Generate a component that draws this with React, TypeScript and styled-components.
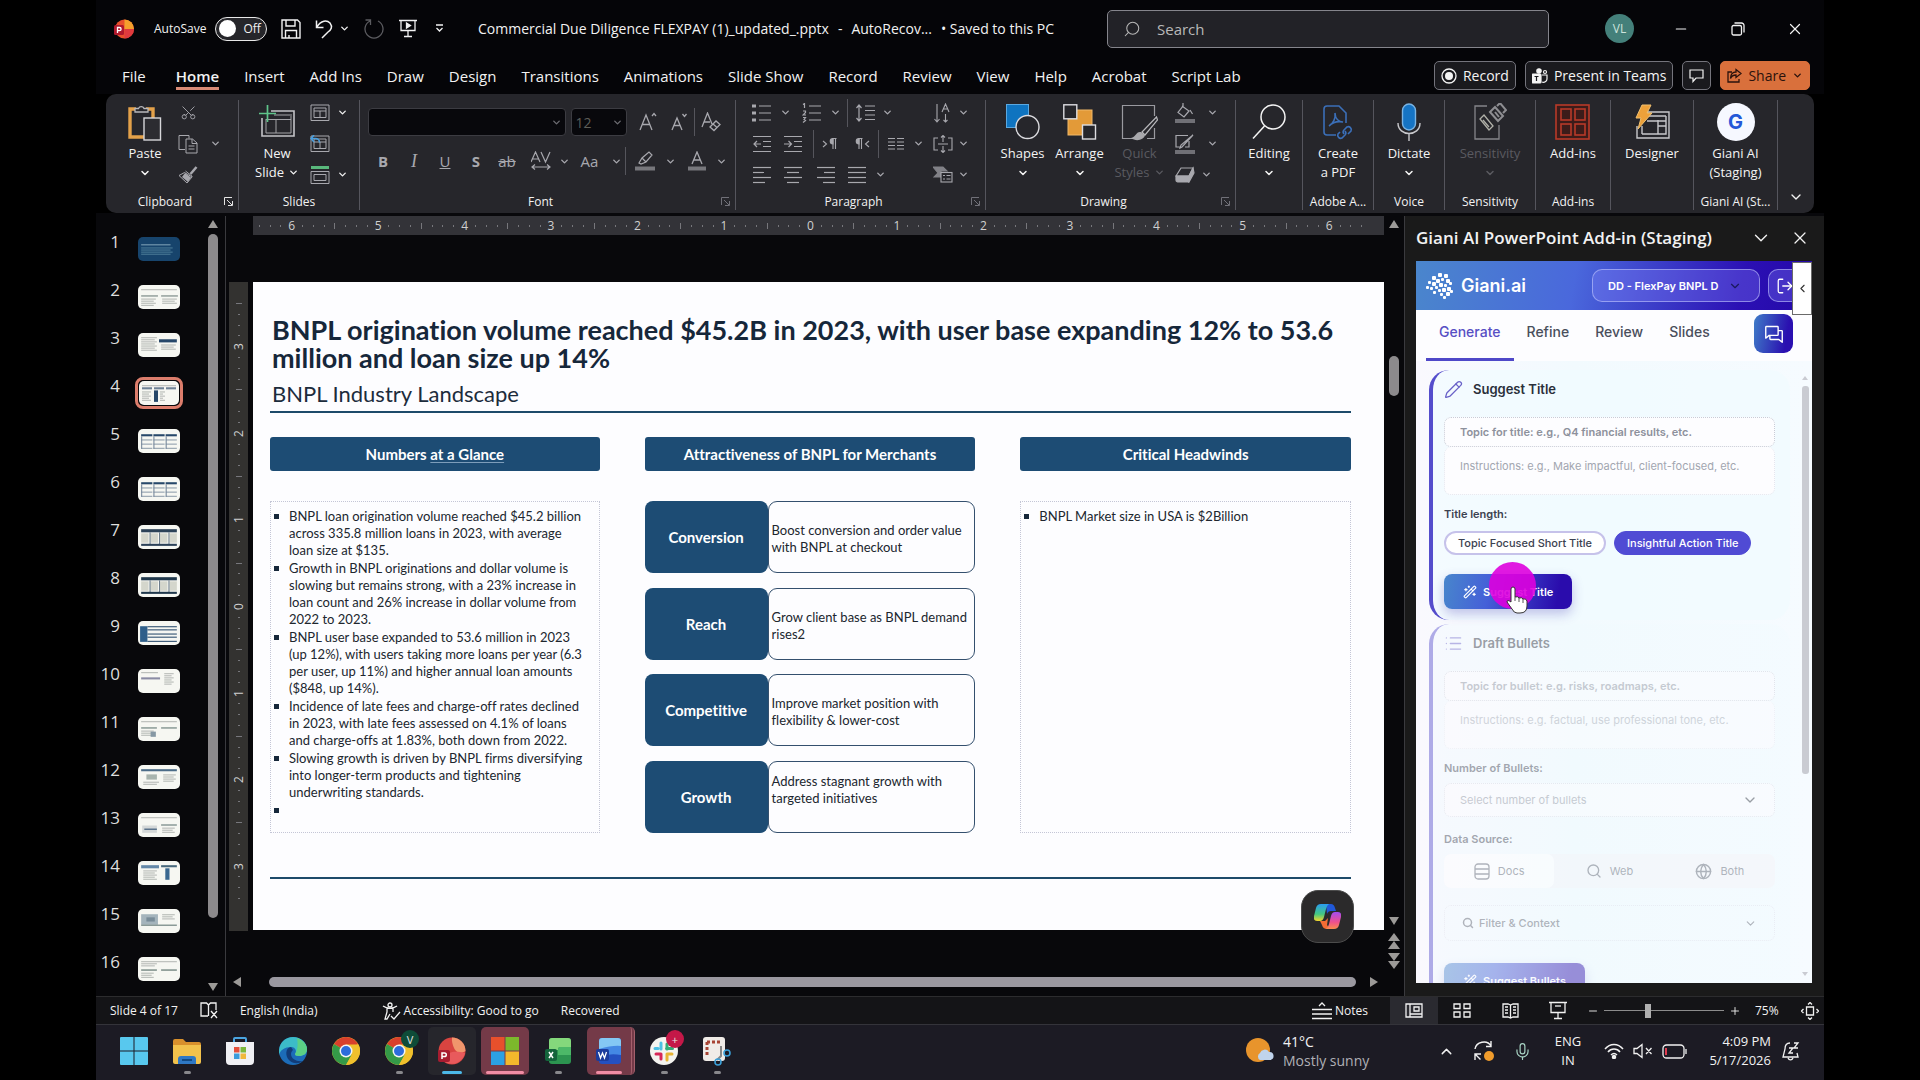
import {
  ChevronDown,
  ChevronLeft,
  ChevronUp,
  Globe,
  List,
  LogOut,
  Mic,
  Minus,
  Pencil,
  Plus,
  Scissors,
  Search,
  WandSparkles,
  X,
} from 'lucide-react';
import React, { ReactNode, useState } from 'react';
import { PiChats } from 'react-icons/pi';
import styled, { createGlobalStyle, css } from 'styled-components';

const GlobalStyle = createGlobalStyle`
  * {
    box-sizing: border-box;
  }
  body {
    margin: 0;
    background: #000;
    color: #f2f2f2;
    font-family: 'Open Sans', 'Noto Sans', sans-serif;
    font-size: 13px;
  }
  button, input, select, textarea {
    font: inherit;
    color: inherit;
    margin: 0;
  }
  button {
    background: none;
    border: none;
    padding: 0;
    cursor: pointer;
  }
  svg {
    display: block;
    flex: none;
  }
  ul, ol {
    list-style: none;
    margin: 0;
    padding: 0;
  }
`;

const Page = styled.div`
  display: flex;
  flex-direction: column;
  height: 100vh;
  padding: 0 96px;
  background: #000;
  overflow: hidden;
`;

/* ---------- title bar ---------- */

const TitleBar = styled.header`
  display: flex;
  align-items: center;
  height: 57px;
  flex: none;
  padding: 0 18px;
  background: #050508;
`;

const QuickAccess = styled.div`
  display: flex;
  align-items: center;
  gap: 14px;
  width: 364px;
  flex: none;
`;

const SaveSwitch = styled.label`
  display: flex;
  align-items: center;
  gap: 9px;
  font-size: 12px;
  margin-left: 6px;
`;

const SwitchInput = styled.input`
  position: absolute;
  opacity: 0;
`;

const SwitchTrack = styled.span`
  display: flex;
  align-items: center;
  gap: 7px;
  width: 52px;
  height: 24px;
  padding: 0 3px;
  border: 1px solid #e8e8e8;
  border-radius: 12px;
  background: #26262a;
  &::before {
    content: '';
    width: 17px;
    height: 17px;
    border-radius: 50%;
    background: #fff;
  }
`;

const IconRow = styled.div<{ $gap?: number }>`
  display: flex;
  align-items: center;
  gap: ${({ $gap }) => $gap ?? 12}px;
`;

const PagerArrows = styled.div`
  display: flex;
  flex-direction: column;
  gap: 4px;
  padding: 8px 0 22px;
`;

const DimIcon = styled.span`
  color: #5c5c60;
`;

const DocTitle = styled.div`
  display: flex;
  gap: 9px;
  flex: 1;
  font-size: 14px;
  white-space: nowrap;
`;

const SearchBox = styled.label`
  display: flex;
  align-items: center;
  gap: 16px;
  width: 442px;
  height: 38px;
  padding: 0 15px;
  border: 1px solid #85858c;
  border-radius: 5px;
  background: #222227;
  color: #b8b8b8;
  font-size: 15px;
  input {
    flex: 1;
    border: none;
    background: none;
    outline: none;
    padding: 0;
  }
  input::placeholder {
    color: #b8b8b8;
  }
`;

const WindowControls = styled.div`
  display: flex;
  align-items: center;
  justify-content: flex-end;
  gap: 37px;
  width: 257px;
  padding-right: 1px;
`;

const ControlButton = styled.button`
  display: grid;
  place-items: center;
  width: 20px;
  height: 20px;
`;

const Avatar = styled.div`
  display: grid;
  place-items: center;
  width: 29px;
  height: 29px;
  border-radius: 50%;
  background: #44807a;
  color: #cde4dc;
  font-size: 12px;
`;

/* ---------- ribbon tabs ---------- */

const TabBar = styled.nav`
  display: flex;
  align-items: center;
  height: 37px;
  flex: none;
  padding: 0 14px 0 26px;
  background: #050508;
`;

const Tabs = styled.div`
  display: flex;
  gap: 25px;
  flex: 1;
  > :first-child {
    margin-right: 5px;
  }
`;

const RibbonTab = styled.button<{ $active?: boolean }>`
  height: 29px;
  padding-top: 3px;
  font-size: 15px;
  white-space: nowrap;
  border-bottom: 3px solid ${({ $active }) => ($active ? '#d98b76' : 'transparent')};
  font-weight: ${({ $active }) => ($active ? 600 : 400)};
`;

const TabActions = styled.div`
  display: flex;
  gap: 9px;
`;

const ActionButton = styled.button<{ $primary?: boolean }>`
  display: flex;
  align-items: center;
  justify-content: center;
  gap: 6px;
  height: 29px;
  min-width: 29px;
  padding: 0 6px;
  border: 1px solid ${({ $primary }) => ($primary ? '#d9703c' : '#74747c')};
  border-radius: 5px;
  background: ${({ $primary }) => ($primary ? '#d9703c' : '#1a1a1e')};
  color: ${({ $primary }) => ($primary ? '#2a120c' : '#f4f4f4')};
  font-size: 14px;
  white-space: nowrap;
`;

/* ---------- ribbon ---------- */

const Ribbon = styled.section`
  display: flex;
  height: 119px;
  flex: none;
  margin: 0 10px;
  padding: 6px 0 3px;
  border-radius: 10px;
  background: #26262b;
`;

const Group = styled.div<{ $w: number; $grow?: boolean }>`
  display: flex;
  flex-direction: column;
  min-width: 0;
  flex: ${({ $grow, $w }) => ($grow ? `1 1 ${$w}px` : `0 0 ${$w}px`)};
  border-right: 1px solid #55555d;
`;

const GroupBody = styled.div`
  display: flex;
  justify-content: center;
  flex: 1;
`;

const GroupFoot = styled.div<{ $launcher?: 'on' | 'dim' }>`
  display: grid;
  grid-template-columns: ${({ $launcher }) => ($launcher ? '1fr 14px' : '1fr')};
  align-items: center;
  height: 18px;
  font-size: 12px;
  text-align: center;
  white-space: nowrap;
  svg {
    color: ${({ $launcher }) => ($launcher === 'dim' ? '#707078' : '#e4e4e4')};
  }
`;

const BigButton = styled.button<{ $dim?: boolean; $w?: number }>`
  display: flex;
  flex-direction: column;
  align-items: center;
  width: ${({ $w }) => ($w ? `${$w}px` : 'auto')};
  padding-top: 3px;
  font-size: 13px;
  line-height: 19px;
  color: ${({ $dim }) => ($dim ? '#5a5a60' : '#f4f4f4')};
  white-space: nowrap;
`;

const BigIcon = styled.span`
  display: grid;
  place-items: center;
  height: 38px;
  margin-bottom: 3px;
`;

const Caret = styled(ChevronDown)`
  margin-top: 4px;
`;

const InlineRow = styled.span`
  display: flex;
  align-items: center;
  gap: 4px;
`;

const ToolStack = styled.div`
  display: flex;
  flex-direction: column;
  margin-top: -3px;
  color: #b4b4ba;
`;

const ToolRow = styled.div<{ $h?: number }>`
  display: flex;
  align-items: center;
  height: ${({ $h }) => $h ?? 31}px;
`;

const ToolGap = styled.span`
  flex: 1;
  min-width: 4px;
`;

const Tool = styled.button<{ $w: number; $bright?: boolean }>`
  display: grid;
  place-items: center;
  flex: none;
  width: ${({ $w }) => $w}px;
  height: 26px;
  color: ${({ $bright }) => ($bright ? '#f0f0f0' : '#a8a8ae')};
`;

const Glyph = styled.span<{ $kind?: 'bold' | 'italic' | 'under' | 'strike' }>`
  font-size: 15px;
  line-height: 18px;
  ${({ $kind }) => $kind === 'bold' && css`font-weight: 700;`}
  ${({ $kind }) => $kind === 'italic' && css`font-family: 'Liberation Serif', serif; font-style: italic; font-size: 18px;`}
  ${({ $kind }) => $kind === 'under' && css`text-decoration: underline;`}
  ${({ $kind }) => $kind === 'strike' && css`text-decoration: line-through;`}
`;

const ToolRule = styled.span`
  width: 1px;
  height: 28px;
  background: #55555c;
`;

const FontField = styled.select<{ $w: number }>`
  width: ${({ $w }) => $w}px;
  height: 28px;
  appearance: none;
  border: 1px solid #3c3c42;
  border-radius: 4px;
  background: #08080c;
  color: #5e5e58;
  padding: 0 4px;
  font-size: 14px;
`;

const FieldWrap = styled.span`
  position: relative;
  display: block;
  margin-right: 5px;
  svg {
    position: absolute;
    right: 4px;
    top: 9px;
    color: #6c6c72;
    pointer-events: none;
  }
`;

const AppBadge = styled.span`
  display: grid;
  place-items: center;
  width: 38px;
  height: 38px;
  border-radius: 50%;
  background: #f6f8ff;
  color: #2458d8;
  font: 700 20px Inter, sans-serif;
`;

const CollapseCell = styled.button`
  display: flex;
  align-items: flex-end;
  justify-content: center;
  flex: 0 0 36px;
  padding-bottom: 5px;
`;

/* ---------- workspace ---------- */

const Workspace = styled.main`
  display: flex;
  flex: 1;
  min-height: 0;
  padding-top: 3px;
  background: #08080b;
`;

const ThumbPane = styled.aside`
  display: flex;
  width: 130px;
  flex: none;
  padding-right: 2px;
  border-right: 1px solid #3a3a3e;
  overflow: hidden;
`;

const ThumbList = styled.ol`
  flex: 1;
  padding-top: 17px;
`;

const ThumbItem = styled.li`
  display: grid;
  grid-template-columns: 24px 1fr;
  column-gap: 15px;
  height: 48px;
  align-items: start;
`;

const ThumbNumber = styled.span`
  font-size: 17px;
  line-height: 17px;
  text-align: right;
  color: #dedede;
`;

const ThumbButton = styled.button<{ $active?: boolean }>`
  width: 48px;
  height: 32px;
  border: ${({ $active }) => ($active ? '3px solid #dc7d6c' : 'none')};
  padding: ${({ $active }) => ($active ? '1px' : '4px 3px')};
  border-radius: 8px;
  svg {
    width: 100%;
    height: 100%;
    border-radius: 5px;
  }
`;

const VScroll = styled.div`
  display: flex;
  flex-direction: column;
  align-items: center;
  width: 20px;
  flex: none;
  padding: 4px 0 5px;
  color: #9c9a98;
`;

const VTrack = styled.div<{ $start: number; $size: number }>`
  display: grid;
  grid-template-rows: ${({ $start, $size }) =>
    `${$start}fr ${$size}fr ${100 - $start - $size}fr`};
  flex: 1;
  width: 10px;
  margin: 6px 0;
  &::before {
    content: '';
    grid-row: 2;
    border-radius: 5px;
    background: #8c8a8c;
  }
`;

const Stage = styled.section`
  display: grid;
  grid-template-columns: 19px 1fr;
  grid-template-rows: 19px 1fr 23px;
  column-gap: 5px;
  flex: 1;
  min-width: 0;
  padding-left: 3px;
`;

const HRuler = styled.div`
  grid-column: 2;
  display: flex;
  background: #333338;
  overflow: hidden;
  padding-right: 17px;
  > :first-child {
    margin-left: -10px;
  }
`;

const VRuler = styled.div`
  display: flex;
  flex-direction: column;
  margin: 47px 0 42px;
  padding: 16px 0 27px;
  background: #333230;
  overflow: hidden;
`;

const RulerCell = styled.div<{ $vertical?: boolean }>`
  display: grid;
  grid-template-columns: repeat(8, 1fr);
  flex: 1;
  place-items: center;
  color: #d0d0d0;
  font-size: 12px;
  line-height: 12px;
  ${({ $vertical }) =>
    $vertical &&
    css`
      writing-mode: vertical-rl;
      span {
        transform: rotate(180deg);
      }
    `}
`;

const RulerTick = styled.i<{ $long?: boolean }>`
  inline-size: 1px;
  block-size: ${({ $long }) => ($long ? 6 : 2)}px;
  background: #77777c;
`;

const SlideSheet = styled.article`
  position: relative;
  display: flex;
  flex-direction: column;
  margin: 47px 0 43px;
  padding: 34px 33px 0 17px;
  background: #fdfdff;
  color: #20262e;
  font-family: Lato, 'Open Sans', sans-serif;
  font-variant-ligatures: none;
`;

const SlideTitle = styled.h1`
  margin: 0;
  padding-left: 2px;
  font-size: 27px;
  line-height: 28px;
  font-weight: 700;
  color: #16273a;
  white-space: pre-line;
`;

const SlideSubtitle = styled.h2`
  margin: 0;
  padding: 8px 0 3px 2px;
  font-size: 22px;
  line-height: 28px;
  font-weight: 400;
  color: #1c2c3c;
`;

const SlideRule = styled.hr<{ $foot?: boolean }>`
  width: 100%;
  height: 2px;
  margin: ${({ $foot }) => ($foot ? '44px 0 0' : '0')};
  border: none;
  background: #1d4a6a;
`;

const SlideColumns = styled.div`
  display: grid;
  grid-template-columns: 330fr 331fr 331fr;
  gap: 45px;
  padding-top: 24px;
`;

const SlideColumn = styled.section`
  display: grid;
  grid-template-rows: 34px 332px;
  row-gap: 30px;
  min-width: 0;
`;

const ColumnHead = styled.h3`
  display: grid;
  place-items: center;
  margin: 0;
  border-radius: 3px;
  background: #1d4c74;
  color: #fff;
  font-size: 15px;
  font-weight: 700;
  span {
    text-decoration: underline;
    text-decoration-color: #7d9dba;
    text-decoration-thickness: 1px;
    text-underline-offset: 2px;
  }
`;

const BulletBox = styled.ul`
  padding: 6px 3px;
  border: 1px dotted #c4c6d6;
  font-size: 13px;
  line-height: 17px;
  li {
    display: grid;
    grid-template-columns: 15px 1fr;
    min-height: 17px;
    margin-bottom: 1px;
    white-space: pre;
  }
  li::before {
    content: '';
    width: 5px;
    height: 5px;
    margin-top: 6px;
    background: #16273a;
  }
`;

const PointList = styled.div`
  display: flex;
  flex-direction: column;
  justify-content: space-between;
`;

const Point = styled.div`
  display: grid;
  grid-template-columns: 123fr 208fr;
  height: 72px;
`;

const PointName = styled.div`
  display: grid;
  place-items: center;
  border-radius: 8px;
  background: #1d4c74;
  color: #fff;
  font-size: 15px;
  font-weight: 700;
`;

const PointText = styled.div<{ $top?: boolean }>`
  display: flex;
  align-items: ${({ $top }) => ($top ? 'flex-start' : 'center')};
  padding: ${({ $top }) => ($top ? '11px 3px' : '6px 3px 2px')};
  border: 1px solid #34506e;
  border-radius: 9px;
  font-size: 13px;
  line-height: 17px;
  white-space: pre;
`;

const CopilotButton = styled.button`
  position: absolute;
  right: 30px;
  bottom: -13px;
  display: grid;
  place-items: center;
  width: 53px;
  height: 53px;
  border: 1px solid #4c4c4c;
  border-radius: 17px;
  background: #2b2a2b;
`;

const HScroll = styled.div`
  grid-column: 1 / 3;
  display: flex;
  align-items: center;
  gap: 28px;
  padding: 0 6px 1px 4px;
  height: 18px;
  color: #9c9a98;
`;

const HThumb = styled.div`
  flex: 1;
  height: 10px;
  border-radius: 5px;
  background: #9a98a0;
  margin-right: -14px;
`;

/* ---------- add-in pane ---------- */

const AddinPane = styled.aside`
  display: flex;
  flex-direction: column;
  width: 420px;
  flex: none;
  padding: 0 12px 13px 11px;
  border-left: 1px solid #3a3a3e;
  background: #1a1a1a;
`;

const PaneHead = styled.div`
  display: flex;
  align-items: center;
  gap: 18px;
  height: 45px;
  flex: none;
  padding: 0 2px 2px 0;
  font-size: 17px;
  font-weight: 600;
  span {
    flex: 1;
    white-space: nowrap;
  }
`;

const AddinFrame = styled.div`
  position: relative;
  display: flex;
  flex-direction: column;
  flex: 1;
  min-height: 0;
  overflow: hidden;
  background: #fbfcff;
  color: #2a2f3a;
  font-family: Inter, sans-serif;
  font-size: 11px;
`;

const BrandBar = styled.div`
  display: flex;
  align-items: center;
  gap: 8px;
  height: 49px;
  flex: none;
  padding-left: 10px;
  background: linear-gradient(100deg, #4a86cc 0%, #4a68dc 40%, #2b10b4 82%, #2408a8 100%);
  color: #fff;
`;

const BrandName = styled.strong`
  flex: 1;
  font-size: 18px;
  font-weight: 600;
`;

const GlassSelect = styled.div`
  position: relative;
  width: 168px;
  height: 33px;
  border: 1px solid rgba(200, 205, 255, 0.55);
  border-radius: 10px;
  background: rgba(140, 140, 255, 0.3);
  select {
    width: 100%;
    height: 100%;
    padding-left: 15px;
    appearance: none;
    border: none;
    background: none;
    font-weight: 600;
  }
  svg {
    position: absolute;
    right: 17px;
    top: 9px;
    color: #1a1a5c;
    pointer-events: none;
  }
`;

const GlassButton = styled.button`
  display: flex;
  align-items: center;
  width: 44px;
  height: 33px;
  padding-left: 7px;
  border: 1px solid rgba(200, 205, 255, 0.55);
  border-radius: 10px;
  background: rgba(140, 140, 255, 0.3);
`;

const SideToggle = styled.button`
  position: absolute;
  right: 0;
  top: 1px;
  display: grid;
  place-items: center;
  width: 20px;
  height: 53px;
  border: 1px solid #6a6a6a;
  background: #fff;
  color: #333;
`;

const AddinTabs = styled.div`
  display: flex;
  padding: 0 19px 0 10px;
  height: 51px;
  flex: none;
  background: #fdfdff;
`;

const AddinTab = styled.button<{ $active?: boolean }>`
  padding: 0 13px 6px;
  border-bottom: 3px solid ${({ $active }) => ($active ? '#4f48c8' : 'transparent')};
  color: ${({ $active }) => ($active ? '#574fc4' : '#4a4f5c')};
  font-size: 14px;
  font-weight: 500;
`;

const ChatButton = styled.button`
  display: grid;
  place-items: center;
  width: 39px;
  height: 39px;
  margin: 4px 0 0 auto;
  border-radius: 9px;
  background: linear-gradient(100deg, #3f7cc8, #2a10b0 80%);
  color: #fff;
`;

const AddinScroll = styled.div`
  display: flex;
  flex: 1;
  min-height: 0;
  background: linear-gradient(90deg, #faf9fe, #f2fafe 40%, #f6fbff);
`;

const Cards = styled.div`
  display: flex;
  flex-direction: column;
  gap: 4px;
  flex: 1;
  min-width: 0;
  padding: 9px 12px 0 13px;
`;

const Card = styled.section<{ $faded?: boolean }>`
  flex: none;
  padding: 8px 15px 11px 11px;
  border-left: 4px solid #554dcc;
  border-radius: 20px;
  background: rgba(240, 251, 255, 0.6);
  opacity: ${({ $faded }) => ($faded ? 0.45 : 1)};
`;

const CardTitle = styled.h4`
  display: flex;
  align-items: center;
  gap: 10px;
  height: 22px;
  margin: 0 0 17px;
  font-size: 13px;
  font-weight: 600;
  svg {
    color: #6a62c8;
  }
`;

const TopicInput = styled.input`
  display: block;
  width: 100%;
  height: 30px;
  padding: 0 15px;
  border: 1px dotted #c9ccd6;
  border-radius: 7px;
  background: #fdfdff;
  font-weight: 600;
  outline: none;
  &::placeholder {
    color: #8d919c;
    opacity: 1;
  }
`;

const NotesArea = styled.textarea`
  display: block;
  width: 100%;
  height: 48px;
  padding: 12px 15px;
  border: 1px dotted #e4e6ee;
  border-top: none;
  border-radius: 7px;
  background: #fdfdff;
  resize: none;
  outline: none;
  white-space: nowrap;
  overflow: hidden;
  &::placeholder {
    color: #a2a6b0;
    opacity: 1;
  }
`;

const FieldLabel = styled.label`
  display: block;
  padding: 12px 0 8px;
  line-height: 14px;
  font-weight: 600;
  color: #3c4250;
`;

const PillRow = styled.div`
  display: flex;
  gap: 8px;
  padding: 2px 0 19px;
`;

const Pill = styled.button<{ $on?: boolean }>`
  height: 24px;
  padding: 0 12px;
  border: ${({ $on }) => ($on ? '1px solid #504bd4' : '2px solid #c6c2ea')};
  border-radius: 12px;
  background: ${({ $on }) => ($on ? '#504bd4' : '#fff')};
  color: ${({ $on }) => ($on ? '#fff' : '#3c4250')};
  font-weight: 500;
  white-space: nowrap;
`;

const CtaWrap = styled.div`
  position: relative;
  width: fit-content;
`;

const Cta = styled.button`
  display: flex;
  align-items: center;
  gap: 6px;
  height: 35px;
  padding: 0 19px;
  border-radius: 8px;
  background: linear-gradient(100deg, #4886cc, #4560d8 35%, #2a0cac 88%);
  box-shadow: 0 5px 12px rgba(70, 60, 180, 0.3);
  color: #fff;
  font-weight: 600;
`;

const ClickHalo = styled.span`
  position: absolute;
  left: 45px;
  top: -12px;
  width: 47px;
  height: 47px;
  border-radius: 50%;
  background: rgba(222, 0, 222, 0.9);
`;

const HandCursor = styled.svg`
  position: absolute;
  left: 61px;
  top: 12px;
`;

const PickerWrap = styled.div`
  position: relative;
  margin-bottom: 3px;
  select {
    display: block;
    width: 100%;
    height: 34px;
    padding: 0 15px;
    appearance: none;
    border: 1px dotted #d4d6e0;
    border-radius: 7px;
    background: #fdfdff;
    color: #8d919c;
  }
  svg {
    position: absolute;
    right: 17px;
    top: 9px;
    pointer-events: none;
  }
`;

const Segments = styled.div`
  display: grid;
  grid-template-columns: repeat(3, 1fr);
  height: 34px;
  background: #f4f4f8;
  border-radius: 7px;
`;

const Segment = styled.button<{ $on?: boolean }>`
  display: flex;
  align-items: center;
  justify-content: center;
  gap: 8px;
  border-radius: 7px;
  background: ${({ $on }) => ($on ? '#fff' : 'transparent')};
  color: #5a5f6c;
`;

const FilterRow = styled.button`
  display: flex;
  align-items: center;
  gap: 5px;
  width: 100%;
  height: 36px;
  margin: 17px 0 22px;
  padding: 0 17px;
  border: 1px dotted #dcdee8;
  border-radius: 7px;
  color: #5a5f6c;
  font-weight: 500;
  svg:last-child {
    margin-left: auto;
  }
`;

const ThinScroll = styled.div`
  display: grid;
  grid-template-rows: 8px 67fr 33fr 8px;
  width: 7px;
  margin: 14px 3px 4px 0;
  row-gap: 3px;
  color: #c9cbd2;
  &::before {
    content: '';
    grid-row: 2;
    border-radius: 3px;
    background: #c9cbd2;
  }
  svg:first-child {
    grid-row: 1;
  }
  svg:last-child {
    grid-row: 4;
  }
`;

/* ---------- status bar ---------- */

const StatusBar = styled.footer`
  display: flex;
  align-items: center;
  height: 28px;
  flex: none;
  padding: 0 5px 0 14px;
  border-top: 1px solid #2c2c2e;
  background: #141417;
  font-size: 12px;
  white-space: nowrap;
`;

const StatusLeft = styled.div`
  display: flex;
  align-items: center;
  gap: 22px;
  flex: 1;
`;

const StatusItem = styled.button<{ $push?: boolean }>`
  display: flex;
  align-items: center;
  gap: 3px;
  margin-left: ${({ $push }) => ($push ? 42 : 0)}px;
`;

const ViewControls = styled.div`
  display: flex;
  align-items: center;
  padding-left: 22px;
`;

const ViewButton = styled.button<{ $on?: boolean }>`
  display: grid;
  place-items: center;
  width: 48px;
  height: 27px;
  background: ${({ $on }) => ($on ? '#2a2a30' : 'transparent')};
`;

const ZoomGroup = styled.div`
  display: flex;
  align-items: center;
  gap: 5px;
  padding-left: 5px;
`;

const ZoomRange = styled.input`
  width: 120px;
  height: 16px;
  appearance: none;
  background: linear-gradient(#8c8c8c, #8c8c8c) center / 100% 1px no-repeat;
  &::-webkit-slider-thumb {
    appearance: none;
    width: 6px;
    height: 14px;
    background: #b0b0b0;
  }
`;

const ZoomValue = styled.span`
  width: 60px;
  padding-left: 14px;
`;

/* ---------- taskbar ---------- */

const Taskbar = styled.footer`
  display: flex;
  align-items: center;
  height: 56px;
  flex: none;
  padding: 0 24px 3px 14px;
  border-top: 1px solid #34343a;
  background: #1c1b24;
`;

const TaskApps = styled.div`
  display: flex;
  gap: 5px;
  flex: 1;
`;

const TaskButton = styled.button<{ $tone?: 'dark' | 'rose'; $stacked?: boolean }>`
  position: relative;
  display: grid;
  place-items: center;
  width: 48px;
  height: 48px;
  border-radius: 5px;
  background: ${({ $tone }) =>
    $tone === 'rose' ? '#743a48' : $tone === 'dark' ? '#26262c' : 'transparent'};
  ${({ $stacked }) => $stacked && css`border-right: 4px double #a4606c;`}
`;

const Marker = styled.i<{ $w: number; $c: string }>`
  position: absolute;
  bottom: 1px;
  width: ${({ $w }) => $w}px;
  height: 3px;
  border-radius: 2px;
  background: ${({ $c }) => $c};
`;

const Badge = styled.b<{ $c: string }>`
  position: absolute;
  right: 4px;
  top: 3px;
  display: grid;
  place-items: center;
  width: 18px;
  height: 18px;
  border-radius: 50%;
  background: ${({ $c }) => $c};
  color: #e6e6e6;
  font-size: 11px;
  font-weight: 400;
`;

const Weather = styled.button`
  display: flex;
  align-items: center;
  gap: 9px;
  text-align: left;
  font-size: 14px;
  line-height: 19px;
  width: 192px;
  span span {
    display: block;
    color: #b0b0b6;
  }
`;

const Tray = styled.div`
  display: flex;
  align-items: center;
  font-size: 13px;
  line-height: 19px;
`;

const MicIcon = styled(Mic)`
  color: #a8d4c4;
`;

const BellSlot = styled.button`
  padding-left: 11px;
`;

const TrayText = styled.div<{ $right?: boolean; $w: number }>`
  width: ${({ $w }) => $w}px;
  text-align: ${({ $right }) => ($right ? 'right' : 'center')};
`;

/* ---------- drawings ---------- */

type DrawProps = { w?: number; h?: number; sw?: number; children: ReactNode };

const Draw = ({ w = 20, h = 20, sw = 1, children }: DrawProps) => (
  <svg
    width={w}
    height={h}
    viewBox={`0 0 ${w} ${h}`}
    fill='none'
    stroke='currentColor'
    strokeWidth={sw}
    aria-hidden='true'
  >
    {children}
  </svg>
);

const SmallCaret = () => <ChevronDown size={11} strokeWidth={3} />;

const Launcher = () => (
  <Draw w={9} h={9}>
    <path d='M.5 8V.5H8M3 3l5 5M8.500 4v4.500H4' />
  </Draw>
);

const PptLogo = () => (
  <Draw w={20} h={20}>
    <g stroke='none'>
      <circle cx='10.500' cy='10' r='9.500' fill='#e8502c' />
      <path d='M10.500.5a9.500 9.500 0 0 1 9.500 9.500h-9.500z' fill='#f5a02c' />
      <path d='M10.500 19.500A9.500 9.500 0 0 0 20 10h-9.500z' fill='#e03a3e' />
      <rect x='0' y='6' width='10' height='10' rx='1.500' fill='#b0182c' />
    </g>
    <path d='M3.500 14V8.500h2a1.600 1.600 0 0 1 0 3.200h-2' stroke='#fff' strokeWidth='1.300' />
  </Draw>
);

const SaveIcon = () => (
  <Draw w={20} h={20} sw={1.4}>
    <path d='M1 1h15.500L19 3.500V19H1zM5 1v6h9V1M4.500 19v-7.500h11V19M8 19v-3' />
  </Draw>
);

const UndoIcon = () => (
  <Draw w={18} h={20} sw={1.5}>
    <path d='M1.500 1.500v7h7M2 8c4-7 10-7 13-4 3 4 1 7-2 9l-6 6' />
  </Draw>
);

const RedoIcon = () => (
  <Draw w={20} h={20} sw={1.3}>
    <path d='M1.500 1h5v5M6 2a9 9 0 1 0 8 0' />
  </Draw>
);

const PresentIcon = ({ play = true }: { play?: boolean }) => (
  <Draw w={18} h={19} sw={1.3}>
    <path d='M0 1.500h18M2 1.500v10h14v-10M9 11.500v6M5 17.500h8' />
    {play ? <path d='M7.500 4l4 2.500-4 2.500z' fill='currentColor' /> : <path d='M6 5h6' />}
  </Draw>
);

const CustomizeIcon = () => (
  <Draw w={9} h={9} sw={1.3}>
    <path d='M1 1h7M1.500 4l3 3 3-3' />
  </Draw>
);

const RestoreIcon = () => (
  <Draw w={14} h={14} sw={1.3}>
    <rect x='1' y='3.500' width='9.500' height='9.500' rx='1.500' />
    <path d='M3.500 1h7A2.500 2.500 0 0 1 13 3.500v7' />
  </Draw>
);

const RecordIcon = () => (
  <Draw w={16} h={16} sw={1.3}>
    <circle cx='8' cy='8' r='7' />
    <circle cx='8' cy='8' r='4' fill='currentColor' stroke='none' />
  </Draw>
);

const TeamsIcon = () => (
  <Draw w={16} h={16} sw={1.2}>
    <rect x='0' y='6' width='9' height='9' rx='1' fill='currentColor' />
    <circle cx='7' cy='3' r='2.200' fill='currentColor' />
    <circle cx='13' cy='4' r='1.500' />
    <path d='M2.500 8.500h4M4.500 8.500v4.500' stroke='#1a1a1e' />
    <path d='M10 7h5v4a3.500 3.500 0 0 1-5 3' />
  </Draw>
);

const CommentIcon = () => (
  <Draw w={15} h={14} sw={1.2}>
    <path d='M1 1h13v8H7l-3 3.500V9H1z' />
  </Draw>
);

const ShareIcon = () => (
  <Draw w={15} h={15} sw={1.3}>
    <path d='M5 4H1v10h11v-3M9 1.500l5 4-5 4V7C6 7 4.500 8 3.500 10.500 3.500 6 6 4 9 4z' />
  </Draw>
);

const PasteIcon = () => (
  <Draw w={34} h={38}>
    <path d='M8 6H2v28h14M18 6h7v9' stroke='#e3a14a' strokeWidth='3.400' />
    <path d='M7 8V5.500h3.500a3 3 0 0 1 5.500 0H20V9H7z' fill='#26262b' stroke='#b8b8bc' strokeWidth='1.300' />
    <rect x='16' y='15' width='16.500' height='22' fill='#2c2c31' stroke='#d6d6da' strokeWidth='1.400' />
  </Draw>
);

const CopyIcon = () => (
  <Draw w={20} h={20}>
    <path d='M7 15.500H1v-14h10v3M8 5h6.500L19 9v10H8zM14 5v4.500h5M10.500 12h6M10.500 15h6' />
  </Draw>
);

const PainterIcon = () => (
  <Draw w={20} h={18}>
    <path d='M18.500 1l-6 7' strokeWidth='2.500' />
    <path d='M7.500 5l7 5.500M6.500 6.500L1 9.500l8 7.500 5-6z' />
    <path d='M4 11l6 5 3-4.500-6-4.500z' fill='currentColor' stroke='none' />
  </Draw>
);

const NewSlideIcon = () => (
  <Draw w={36} h={34}>
    <path d='M12 6h23v25H3V13' stroke='#c4c4c8' strokeWidth='1.600' />
    <path d='M15 10h16M7 14.500h25M7 28h25M7 14v14M17 14.500V28M32 9v19' stroke='#a4a4a8' />
    <path d='M8.500 0v17M0 8.500h17' stroke='#5fc48a' strokeWidth='1.700' />
  </Draw>
);

const LayoutIcon = ({ kind }: { kind: 'layout' | 'reset' | 'section' }) => (
  <Draw w={20} h={18}>
    {kind === 'section' && <path d='M1 1.500h18' stroke='#59b87c' strokeWidth='3' />}
    {kind === 'section' ? (
      <path d='M1 5.500h18v12H1zM4 8.500h12v6H4z' />
    ) : (
      <path d='M1 1h18v15.500H1zM4 4h12v9.500H4zM4 7h12M10 7v6.500' />
    )}
    {kind === 'reset' && (
      <path d='M4 0L1 3.500 4 7M1 3.500h4.500a4 4 0 0 1 4 4' stroke='#4aa0e0' strokeWidth='1.600' />
    )}
  </Draw>
);

const LinesIcon = ({ rows }: { rows: number[][] }) => (
  <Draw w={18} h={18} sw={1.2}>
    {rows.map(([x, len], i) => (
      <path key={i} d={`M${x} ${1.5 + i * 5}h${len}`} />
    ))}
  </Draw>
);

const ListIcon = ({ numbered }: { numbered?: boolean }) => (
  <Draw w={19} h={20} sw={1.2}>
    <path d='M7 3h12M7 10h12M7 17h12' />
    {numbered ? (
      <path d='M1 1.500l1.500-1V5M1 8h2.500v1.500L1 12h3M1 14.500h2.500L2 16.500l1.500 1L1 19.500' />
    ) : (
      <path d='M0 3h4M0 10h4M0 17h4' strokeWidth='3' />
    )}
  </Draw>
);

const SpacingIcon = () => (
  <Draw w={20} h={18} sw={1.2}>
    <path d='M4 1v16M1.500 4L4 1l2.500 3M1.500 14L4 17l2.500-3M10 2h10M10 6.500h10M10 11h10M10 15.500h10' />
  </Draw>
);

const IndentIcon = ({ out }: { out?: boolean }) => (
  <Draw w={18} h={18} sw={1.2}>
    <path d='M0 1.500h18M10 6.500h8M10 11.500h8M0 16.500h18' />
    <path d={out ? 'M8 9H1M4 6L1 9l3 3' : 'M0 9h7M4.500 6l3 3-3 3'} />
  </Draw>
);

const DirectionIcon = ({ rtl }: { rtl?: boolean }) => (
  <Draw w={16} h={14} sw={1.1}>
    <path d={rtl ? 'M15 4l-3.500 3 3.500 3' : 'M1 4l3.500 3L1 10'} />
    <g transform={rtl ? 'translate(-6 0)' : undefined}>
      <path d='M14.500 1.500H10M11 1.500V12M13.500 1.500V12' />
      <path d='M11 1.500a2.700 2.700 0 0 0 0 5.500z' fill='currentColor' />
    </g>
  </Draw>
);

const ColumnsIcon = () => (
  <Draw w={16} h={14} sw={1.1}>
    <path d='M0 1.500h7M9 1.500h7M0 5h7M9 5h7M0 8.500h7M9 8.500h7M0 12h7M9 12h7' />
  </Draw>
);

const TextDirIcon = () => (
  <Draw w={17} h={20} sw={1.1}>
    <path d='M3 1v18M.5 16L3 19l2.500-3M8 9l3.500-8L15 9M9.500 6h4M11.500 11v8M9.500 17l2 2 2-2' />
  </Draw>
);

const AlignTextIcon = () => (
  <Draw w={20} h={18} sw={1.1}>
    <path d='M5 3H1v12h4M15 3h4v12h-4M5 9h10M10 0v7M10 11v7M8 2.500L10 .5l2 2M8 15.500l2 2 2-2' />
  </Draw>
);

const SmartArtIcon = () => (
  <Draw w={20} h={17} sw={1.1}>
    <path d='M0 1h10l4 4H8v6H1l4-4z' fill='currentColor' opacity='.7' />
    <rect x='8' y='6.500' width='11' height='9.500' fill='#26262b' />
    <path d='M10 9.500h2M13.500 9.500h4M10 13h2M13.500 13h4' />
  </Draw>
);

const ShapesIcon = () => (
  <Draw w={34} h={36}>
    <rect x='.5' y='.5' width='22' height='23' fill='#0f74c0' stroke='#5aa8e0' />
    <circle cx='21.500' cy='23' r='11.500' fill='#26262b' stroke='#dcdce0' strokeWidth='1.400' />
  </Draw>
);

const ArrangeIcon = () => (
  <Draw w={34} h={36}>
    <rect x='5' y='6' width='24' height='25' fill='#e39a38' stroke='#f0b868' />
    <rect x='.8' y='.8' width='13' height='14' fill='#26262b' stroke='#dcdce0' strokeWidth='1.400' />
    <rect x='19.500' y='21' width='13' height='14' fill='#26262b' stroke='#dcdce0' strokeWidth='1.400' />
  </Draw>
);

const QuickStylesIcon = () => (
  <Draw w={37} h={37}>
    <path d='M13 34.500H1.500v-33h32V12M33.500 24v10.500H26' stroke='#9a9aa0' strokeWidth='1.200' />
    <path d='M35.500 13L21 28l3 3 12.500-15z' stroke='#b8b8bc' strokeWidth='1.200' />
    <path d='M20 28c-5-1-5 5-10 6 5 4 13 2 14-3z' fill='#a8a8ac' stroke='none' />
  </Draw>
);

const FillIcon = () => (
  <Draw w={20} h={20} sw={1.2}>
    <path d='M7 3l7 5-5 6-6-4.500 5-6.500V0M15 7l2.500 4' />
    <path d='M0 18h20' strokeWidth='4' stroke='#707076' />
  </Draw>
);

const OutlineIcon = () => (
  <Draw w={20} h={20} sw={1.2}>
    <path d='M13 1.500H1V13h4M18 1L7 13l-2 1 1-3zM14 7v6h-4' />
    <path d='M0 18h20' strokeWidth='4' stroke='#707076' />
  </Draw>
);

const EffectsIcon = () => (
  <Draw w={20} h={17} sw={1.2}>
    <path d='M6 2h12l-4 8H1z' fill='#26262b' />
    <path d='M1 10h13v6H4q-3 0-3-2zM14 10l4-8 1 5-5 9z' fill='currentColor' />
  </Draw>
);

const BigSearchIcon = () => (
  <Draw w={36} h={36} sw={1.5}>
    <circle cx='22' cy='13' r='12' />
    <path d='M13.500 22L2 34.500' />
  </Draw>
);

const PdfIcon = () => (
  <Draw w={32} h={36} sw={1.6}>
    <g stroke='#3b6fb8'>
      <path d='M14 31H5q-3 0-3-3V5q0-3 3-3h12l7 7v10M7 22c4-2 7-8 6-13M13 9c0 6 4 9 8 9-5-1-10 0-14 4' />
      <path d='M18 28l-2 2a3 3 0 0 0 4 4l3-3a3 3 0 0 0 0-4M26 30l3-3a3 3 0 0 0-4-4l-3 3a3 3 0 0 0 0 4' />
    </g>
  </Draw>
);

const DictateIcon = () => (
  <Draw w={26} h={38} sw={1.4}>
    <rect x='6.500' y='1' width='13' height='26' rx='6.500' fill='#1674c4' stroke='#7ab4e4' />
    <path d='M2 20c0 14 22 14 22 0M13 31v7' stroke='#c8c8cc' />
  </Draw>
);

const SensitivityIcon = () => (
  <Draw w={34} h={38} sw={1.3}>
    <path d='M14 3H2v33h24V22' stroke='#85858a' />
    <path d='M7 16l4-4 9 11-4 4zM10 17l6 7' stroke='#b0b0a8' />
    <path d='M17 9l5-5 8 9-5 5zM24 3l3-3 6 7-3 3M22 9l4 5' stroke='#8e8e92' strokeWidth='2' />
  </Draw>
);

const AddinsIcon = () => (
  <Draw w={35} h={36} sw={1.6}>
    <g stroke='#b83a28'>
      <rect x='1' y='1' width='33' height='34' fill='#3c1c1a' />
      <rect x='6' y='5' width='10' height='11' />
      <rect x='20' y='5' width='10' height='11' />
      <rect x='6' y='20' width='10' height='11' />
      <rect x='20' y='20' width='10' height='11' />
    </g>
  </Draw>
);

const DesignerIcon = () => (
  <Draw w={36} h={36} sw={1.4}>
    <path d='M12 8h23v26H3V22M14 12h18M8 30h24V12M8 30v-8M24 16v14M24 22h8M13 17h19' stroke='#c8c8cc' />
    <path d='M8 1h9l-4 8h5L4 25l3-11H2z' fill='#eda13a' stroke='#f0c070' strokeWidth='1' />
  </Draw>
);

const CopilotIcon = () => (
  <svg width='27' height='25' viewBox='0 0 27 25' aria-hidden='true'>
    <defs>
      <linearGradient id='copA' x1='0' y1='0' x2='0' y2='1'>
        <stop offset='0' stopColor='#2a9cf0' />
        <stop offset='.6' stopColor='#44c880' />
        <stop offset='1' stopColor='#f4d62c' />
      </linearGradient>
      <linearGradient id='copB' x1='0' y1='0' x2='0' y2='1'>
        <stop offset='0' stopColor='#a24cf0' />
        <stop offset='.6' stopColor='#f0508c' />
        <stop offset='1' stopColor='#fa8c4c' />
      </linearGradient>
    </defs>
    <path d='M12 0h5q3 0 4 4l1 3h-5q-3 0-4 3z' fill='#2058d8' />
    <path d='M6 17h5l3-3-1 7 3 4h-3q-4 0-5-4z' fill='#f46c34' />
    <path d='M7 0h8q-2 1-3 5l-2 8q-1 4-4 4H3q-4 0-3-5l2-8q1-4 5-4z' fill='url(#copA)' />
    <path d='M20 25h-8q2-1 3-5l2-8q1-4 4-4h3q4 0 3 5l-2 8q-1 4-5 4z' fill='url(#copB)' />
  </svg>
);

const brandDots = [
  [12, 0, 4], [18, 1, 4], [6, 3, 4], [10, 6, 4], [15, 5, 3], [20, 6, 4], [2, 8, 3], [6, 9, 4],
  [13, 10, 4], [18, 11, 3], [23, 9, 3], [0, 13, 3], [4, 14, 3], [9, 13, 3], [21, 14, 4], [7, 18, 3],
  [12, 16, 3], [16, 15, 4], [14, 20, 3], [20, 19, 4], [24, 17, 3], [17, 23, 3],
];

const BrandMark = () => (
  <svg width='27' height='26' viewBox='0 0 27 26' fill='#fff' aria-hidden='true'>
    {brandDots.map(([x, y, s], i) => (
      <rect key={i} x={x} y={y} width={s} height={s} rx='1' />
    ))}
  </svg>
);

const DocsIcon = () => (
  <Draw w={16} h={17} sw={1.3}>
    <rect x='1' y='1' width='14' height='15' rx='3' />
    <path d='M1 6h14M1 11h14' />
  </Draw>
);

const Tri = ({ d, w = 10, h = 8 }: { d: string; w?: number; h?: number }) => (
  <svg width={w} height={h} viewBox={`0 0 ${w} ${h}`} fill='currentColor' aria-hidden='true'>
    <path d={d} />
  </svg>
);

/* x, y, width, height, colour of the marks inside each slide preview */
type Mark = [number, number, number, number, string];

const navy = '#27486a';
const grey = '#b4b8b4';
const lines = (x: number, y: number, w: number, n: number, c = grey): Mark[] =>
  Array.from({ length: n }, (_, i) => [x, y + i * 2, w - (i % 2) * 2, 1, c]);
const boxes = (n: number, top: string): Mark[] =>
  Array.from({ length: n }, (_, i): Mark[] => {
    const w = 35 / n;
    const x = 3 + i * w;
    return [
      [x, 5, w - 1, 2, top],
      [x, 10, w - 1, 1, '#8d9caa'],
      [x, 14, w - 1, 1, '#8d9caa'],
      [x, 18, w - 1, 1, '#8d9caa'],
      [x, 7, 1, 12, '#73859a'],
    ];
  }).flat();
const panels = (top: string): Mark[] => [
  [3, 4, 34, 3, top],
  ...[0, 1, 2, 3].map((i): Mark => [3 + i * 9, 8, 7, 9, '#d4d6cc']),
  ...[1, 2, 3].map((i): Mark => [2 + i * 9, 7, 1, 12, '#6c7c8c']),
  [3, 18, 34, 2, top],
];

const previews: Mark[][] = [
  [[3, 7, 28, 1, '#7fa3b8'], ...lines(3, 10, 30, 4, '#4c7c98')],
  [[3, 4, 34, 1, grey], [3, 10, 16, 1, '#6a7a78'], [22, 10, 16, 1, '#6a7a78'], ...lines(3, 13, 14, 4), ...lines(23, 13, 14, 3)],
  [...lines(3, 4, 15, 7), [20, 6, 17, 3, navy], ...lines(22, 11, 14, 3)],
  [[3, 4, 34, 1, grey], [3, 6, 10, 2, '#6f8296'], [15, 6, 10, 2, '#6f8296'], [27, 6, 10, 2, '#6f8296'], ...lines(3, 10, 9, 5), [15, 9, 4, 11, navy], ...lines(21, 10, 5, 5)],
  boxes(3, navy),
  boxes(3, navy),
  panels('#2c4258'),
  panels('#20384c'),
  [[2, 5, 7, 15, '#2f5f8a'], [9, 5, 28, 1, navy], [9, 8, 28, 1, navy], [9, 12, 28, 1, navy], [9, 15, 28, 1, navy], [9, 19, 28, 1, navy]],
  [[3, 3, 16, 1, grey], [3, 8, 18, 2, '#8a8ca4'], ...lines(25, 4, 9, 6)],
  [[3, 4, 34, 1, grey], [3, 10, 15, 1, '#5c7270'], [22, 10, 15, 1, '#5c7270'], ...lines(3, 13, 12, 3), [12, 14, 5, 5, '#8698a4']],
  [[3, 4, 34, 2, '#4c6c88'], [8, 9, 10, 5, '#a8b4ae'], ...lines(5, 16, 15, 2), ...lines(24, 9, 12, 4)],
  [[3, 4, 34, 1, grey], [4, 12, 14, 7, '#d4d8d8'], [6, 15, 12, 1, navy], [22, 11, 15, 1, '#5c7270'], ...lines(23, 14, 12, 3)],
  [[3, 4, 17, 3, '#6488a8'], [22, 4, 15, 2, '#48687c'], ...lines(5, 9, 13, 5), [26, 7, 4, 11, '#3a6890']],
  [[3, 5, 16, 10, '#a4b4bc'], [8, 8, 8, 4, '#788c98'], [3, 15, 34, 1, '#5c7270'], ...lines(23, 5, 12, 3)],
  [[3, 4, 34, 1, grey], ...lines(3, 6, 15, 2), [3, 12, 15, 1, '#48605c'], [22, 12, 15, 1, '#48605c'], ...lines(3, 15, 12, 3)],
];

const Preview = ({ marks, dark }: { marks: Mark[]; dark?: boolean }) => (
  <svg viewBox='0 0 40 23' preserveAspectRatio='none' aria-hidden='true'>
    <rect width='40' height='23' fill={dark ? '#17446c' : '#f6f7f2'} />
    {marks.map(([x, y, w, h, c], i) => (
      <rect key={i} x={x} y={y} width={w} height={h} fill={c} />
    ))}
  </svg>
);

const task = {
  windows: (
    <svg width='28' height='28' viewBox='0 0 28 28' fill='#58c8ee'>
      <path d='M0 1q0-1 1-1h12.500v13.500H0zM14.500 0H27q1 0 1 1v12.500H14.500zM0 14.500h13.500V28H1q-1 0-1-1zM14.500 14.500H28V27q0 1-1 1H14.500z' />
    </svg>
  ),
  folder: (
    <svg width='28' height='26' viewBox='0 0 28 26'>
      <path d='M0 3q0-2 2-2h8l3 3h13q2 0 2 2v4H0z' fill='#d8902c' />
      <path d='M0 7h28v17q0 2-2 2H2q-2 0-2-2z' fill='#f2c24c' />
      <path d='M5 26v-5q0-3 3-3h12q3 0 3 3v5z' fill='#2f78c4' />
      <path d='M9 22h10' stroke='#124a84' strokeWidth='2' />
    </svg>
  ),
  store: (
    <svg width='28' height='28' viewBox='0 0 28 28'>
      <path d='M8 7V2q0-1 1-1h10q1 0 1 1v5' fill='none' stroke='#4aa4e0' strokeWidth='2' />
      <path d='M0 5h28v19q0 4-4 4H4q-4 0-4-4z' fill='#f0f0f4' />
      <path d='M8 10h5.500v5.500H8z' fill='#e4503c' />
      <path d='M14.500 10H20v5.500h-5.500z' fill='#7cb83c' />
      <path d='M8 16.500h5.500V22H8z' fill='#3c9cdc' />
      <path d='M14.500 16.500H20V22h-5.500z' fill='#f0b83c' />
    </svg>
  ),
  edge: (
    <svg width='28' height='28' viewBox='0 0 28 28'>
      <circle cx='14' cy='14' r='14' fill='#1c6cb8' />
      <path d='M0 13C1 5 7 0 14 0c8 0 14 6 14 12 0 5-4 7-8 7-3 0-4-1-4-2 2-2 1-7-4-7-6 0-11 3-12 8z' fill='#3cbcc8' />
      <path d='M18 1c6 2 10 7 10 11 0 5-4 7-8 7-3 0-4-1-4-2 3-4 3-11 2-16z' fill='#5cd084' />
      <path d='M12 10c-5 0-7 9-1 14 4 3 9 3 13 0-6 1-12-2-12-7 0-2 1-3 2-4z' fill='#123c78' />
    </svg>
  ),
  chrome: (
    <svg width='28' height='28' viewBox='0 0 28 28'>
      <circle cx='14' cy='14' r='14' fill='#f0c02c' />
      <path d='M14 14L1.900 7A14 14 0 0 1 26.100 7z' fill='#d8402c' />
      <path d='M14 14L1.900 7A14 14 0 0 0 14 28l6-10.500z' fill='#349a48' />
      <path d='M14 7.500h12.400A14 14 0 0 1 14 28l5.600-10z' fill='#f0c02c' />
      <circle cx='14' cy='14' r='6.500' fill='#f4f4f4' />
      <circle cx='14' cy='14' r='5' fill='#2c6cdc' />
    </svg>
  ),
  powerpoint: (
    <svg width='28' height='28' viewBox='0 0 28 28'>
      <circle cx='14' cy='14' r='13.500' fill='#d84440' />
      <path d='M14 .5A13.500 13.500 0 0 1 27.500 14c-4 3-9 2-11-2s-3-8-2.500-11.500z' fill='#f0966c' />
      <path d='M8 20c2-6 10-6 19-4a13.500 13.500 0 0 1-20 9z' fill='#e85a5c' />
      <rect x='0' y='13' width='12' height='12' rx='2' fill='#a81c30' />
      <path d='M4 22v-6h2.500a1.800 1.800 0 0 1 0 3.600H4' fill='none' stroke='#fff' strokeWidth='1.500' />
    </svg>
  ),
  microsoft: (
    <svg width='28' height='28' viewBox='0 0 28 28'>
      <path d='M0 0h13.500v13.500H0z' fill='#e8502c' />
      <path d='M14.500 0H28v13.500H14.500z' fill='#7cb82c' />
      <path d='M0 14.500h13.500V28H0z' fill='#2ca0e4' />
      <path d='M14.500 14.500H28V28H14.500z' fill='#f4b82c' />
    </svg>
  ),
  excel: (
    <svg width='26' height='28' viewBox='0 0 26 28'>
      <rect x='4' y='1' width='22' height='26' rx='3' fill='#2c9450' />
      <path d='M4 4q0-3 3-3h16q3 0 3 3v6H15q-2 0-2 3H4z' fill='#84d87c' />
      <path d='M15 10h11v8H13v-5q0-3 2-3z' fill='#4cb868' />
      <rect x='0' y='12' width='12' height='12' rx='2' fill='#14643c' />
      <path d='M4 15l4 6M8 15l-4 6' stroke='#fff' strokeWidth='1.500' />
    </svg>
  ),
  word: (
    <svg width='26' height='28' viewBox='0 0 26 28'>
      <rect x='3' y='1' width='22' height='26' rx='3' fill='#2450c0' />
      <path d='M3 4q0-3 3-3h16q3 0 3 3v5q-8 0-10 3H3z' fill='#84c8f4' />
      <path d='M3 12q14-4 22-3v9q-12-2-22 2z' fill='#4488e4' />
      <rect x='0' y='12' width='13' height='12' rx='2' fill='#1c3c9c' />
      <path d='M2.500 15l2 6 2-5 2 5 2-6' fill='none' stroke='#fff' strokeWidth='1.300' />
    </svg>
  ),
  slack: (
    <svg width='28' height='28' viewBox='0 0 28 28'>
      <circle cx='14' cy='14' r='14' fill='#f4f4f0' />
      <path d='M11 6v6M5 11.500h3' stroke='#4cc0e4' strokeWidth='3' strokeLinecap='round' />
      <path d='M17 7v5M16.500 11.500h6' stroke='#34ac78' strokeWidth='3' strokeLinecap='round' />
      <path d='M6 17h5M11 17v5' stroke='#d82858' strokeWidth='3' strokeLinecap='round' />
      <path d='M17 17v6M17 17h5' stroke='#e8b434' strokeWidth='3' strokeLinecap='round' />
    </svg>
  ),
  snip: (
    <svg width='30' height='30' viewBox='0 0 30 30' fill='none'>
      <rect x='1' y='1' width='22' height='24' rx='3' fill='#f0ece8' />
      <path d='M5 6h14M5 6v14' stroke='#a84434' strokeWidth='3' strokeDasharray='3 2' />
      <path d='M19 10v10l-4 4' stroke='#888' strokeWidth='2' />
      <circle cx='25' cy='17' r='3' stroke='#3ca0d8' strokeWidth='1.600' />
      <circle cx='16' cy='26' r='3' stroke='#3ca0d8' strokeWidth='1.600' />
    </svg>
  ),
};

/* ---------- content ---------- */

const ribbonTabs = [
  'File', 'Home', 'Insert', 'Add Ins', 'Draw', 'Design', 'Transitions', 'Animations',
  'Slide Show', 'Record', 'Review', 'View', 'Help', 'Acrobat', 'Script Lab',
];

const bullets = [
  'BNPL loan origination volume reached $45.2 billion\nacross 335.8 million loans in 2023, with average\nloan size at $135.',
  'Growth in BNPL originations and dollar volume is\nslowing but remains strong, with a 23% increase in\nloan count and 26% increase in dollar volume from\n2022 to 2023.',
  'BNPL user base expanded to 53.6 million in 2023\n(up 12%), with users taking more loans per year (6.3\nper user, up 11%) and higher annual loan amounts\n($848, up 14%).',
  'Incidence of late fees and charge-off rates declined\nin 2023, with late fees assessed on 4.1% of loans\nand charge-offs at 1.83%, both down from 2022.',
  'Slowing growth is driven by BNPL firms diversifying\ninto longer-term products and tightening\nunderwriting standards.',
  '',
];

const points = [
  { name: 'Conversion', text: 'Boost conversion and order value\nwith BNPL at checkout' },
  { name: 'Reach', text: 'Grow client base as BNPL demand\nrises2' },
  { name: 'Competitive', text: 'Improve market position with\nflexibility & lower-cost' },
  { name: 'Growth', text: 'Address stagnant growth with\ntargeted initiatives', top: true },
];

const RibbonGroup = ({
  w,
  name,
  grow,
  launcher,
  children,
}: {
  w: number;
  name: string;
  grow?: boolean;
  launcher?: 'on' | 'dim';
  children: ReactNode;
}) => (
  <Group $w={w} $grow={grow}>
    <GroupBody>{children}</GroupBody>
    <GroupFoot $launcher={launcher}>
      <span>{name}</span>
      {launcher && <Launcher />}
    </GroupFoot>
  </Group>
);

const Ruler = ({ labels, vertical }: { labels: number[]; vertical?: boolean }) => (
  <>
    {labels.map((n, i) => (
      <RulerCell key={i} $vertical={vertical}>
        <RulerTick $long />
        <RulerTick />
        <RulerTick />
        <RulerTick />
        <span>{n}</span>
        <RulerTick />
        <RulerTick />
        <RulerTick />
      </RulerCell>
    ))}
  </>
);

const CaretTool = ({ w = 20 }: { w?: number }) => (
  <Tool $w={w} aria-label='More'>
    <SmallCaret />
  </Tool>
);

const RibbonPanel = () => (
  <Ribbon>
    <RibbonGroup w={133} name='Clipboard' launcher='on'>
      <BigButton $w={62}>
        <BigIcon><PasteIcon /></BigIcon>
        Paste
        <Caret size={12} strokeWidth={3} />
      </BigButton>
      <ToolStack>
        <ToolRow>
          <Tool $w={24} aria-label='Cut'><Scissors size={17} strokeWidth={1.3} transform='rotate(-90)' /></Tool>
        </ToolRow>
        <ToolRow>
          <Tool $w={24} aria-label='Copy'><CopyIcon /></Tool>
          <CaretTool w={30} />
        </ToolRow>
        <ToolRow>
          <Tool $w={24} aria-label='Format painter'><PainterIcon /></Tool>
        </ToolRow>
      </ToolStack>
    </RibbonGroup>

    <RibbonGroup w={121} name='Slides'>
      <BigButton $w={56}>
        <BigIcon><NewSlideIcon /></BigIcon>
        New
        <InlineRow>Slide <SmallCaret /></InlineRow>
      </BigButton>
      <ToolStack>
        <ToolRow>
          <Tool $w={30}><LayoutIcon kind='layout' /></Tool>
          <Tool $w={14} $bright><SmallCaret /></Tool>
        </ToolRow>
        <ToolRow>
          <Tool $w={30}><LayoutIcon kind='reset' /></Tool>
        </ToolRow>
        <ToolRow>
          <Tool $w={30}><LayoutIcon kind='section' /></Tool>
          <Tool $w={14} $bright><SmallCaret /></Tool>
        </ToolRow>
      </ToolStack>
    </RibbonGroup>

    <RibbonGroup w={376} name='Font' launcher='dim'>
      <ToolStack>
        <ToolRow $h={50}>
          <FieldWrap>
            <FontField $w={198} aria-label='Font'>
              <option> </option>
            </FontField>
            <SmallCaret />
          </FieldWrap>
          <FieldWrap>
            <FontField $w={56} aria-label='Font size'>
              <option>12</option>
            </FontField>
            <SmallCaret />
          </FieldWrap>
          <Tool $w={32}>
            <Draw w={18} h={20} sw={1.3}><path d='M1 18L7 3l6 15M3 12.500h8M13 4l2-2.500L17 4' /></Draw>
          </Tool>
          <Tool $w={30}>
            <Draw w={18} h={20} sw={1.3}><path d='M2 18L7 6l5 12M4 13.500h6M12.500 2l2 2.500 2-2.500' /></Draw>
          </Tool>
          <ToolRule />
          <Tool $w={32}>
            <Draw w={20} h={20} sw={1.3}><path d='M1 15L6.500 1 11 12M3 10h6M9 15l6-6 4 3.500-6 6zM12 12l4 3.500' /></Draw>
          </Tool>
        </ToolRow>
        <ToolRow $h={28}>
          <Tool $w={31}><Glyph $kind='bold'>B</Glyph></Tool>
          <Tool $w={31}><Glyph $kind='italic'>I</Glyph></Tool>
          <Tool $w={31}><Glyph $kind='under'>U</Glyph></Tool>
          <Tool $w={31}><Glyph $kind='bold'>S</Glyph></Tool>
          <Tool $w={31}><Glyph $kind='strike'>ab</Glyph></Tool>
          <Tool $w={36}>
            <Draw w={20} h={20} sw={1.2}>
              <path d='M0 11L4.500 1 9 11M2 8h5M10 1l4.500 10L19 1M1 16h18M4 13.500L1 16l3 2.500M16 13.500l3 2.500-3 2.500' />
            </Draw>
          </Tool>
          <CaretTool w={12} />
          <Tool $w={38}><Glyph>Aa</Glyph></Tool>
          <CaretTool w={16} />
          <ToolRule />
          <Tool $w={38}>
            <Draw w={20} h={20} sw={1.2}>
              <path d='M4 12l3-5L14 1l3 3-6 7-5 2zM7 7l4 4' />
              <path d='M0 17.500h20' strokeWidth='4' stroke='#77777c' />
            </Draw>
          </Tool>
          <CaretTool w={14} />
          <Tool $w={38}>
            <Draw w={20} h={20} sw={1.3}>
              <path d='M5 13l5-12 5 12M7 9h6' />
              <path d='M1 17.500h18' strokeWidth='4' stroke='#77777c' />
            </Draw>
          </Tool>
          <CaretTool w={12} />
        </ToolRow>
      </ToolStack>
    </RibbonGroup>

    <RibbonGroup w={250} name='Paragraph' launcher='dim'>
      <ToolStack>
        <ToolRow>
          <Tool $w={22}><ListIcon /></Tool>
          <CaretTool w={26} />
          <Tool $w={26}><ListIcon numbered /></Tool>
          <CaretTool w={22} />
          <ToolRule />
          <Tool $w={34}><SpacingIcon /></Tool>
          <CaretTool w={12} />
          <ToolGap />
          <Tool $w={28}><TextDirIcon /></Tool>
          <CaretTool w={14} />
        </ToolRow>
        <ToolRow>
          <Tool $w={22}><IndentIcon out /></Tool>
          <Tool $w={40}><IndentIcon /></Tool>
          <ToolRule />
          <Tool $w={32}><DirectionIcon /></Tool>
          <Tool $w={32}><DirectionIcon rtl /></Tool>
          <ToolRule />
          <Tool $w={34}><ColumnsIcon /></Tool>
          <CaretTool w={12} />
          <ToolGap />
          <Tool $w={28}><AlignTextIcon /></Tool>
          <CaretTool w={14} />
        </ToolRow>
        <ToolRow>
          <Tool $w={22}><LinesIcon rows={[[0, 18], [0, 11], [0, 18], [0, 12]]} /></Tool>
          <Tool $w={40}><LinesIcon rows={[[0, 18], [3, 12], [0, 18], [3, 12]]} /></Tool>
          <Tool $w={26}><LinesIcon rows={[[0, 18], [7, 11], [0, 18], [6, 12]]} /></Tool>
          <Tool $w={36}><LinesIcon rows={[[0, 18], [0, 18], [0, 18], [0, 18]]} /></Tool>
          <CaretTool w={12} />
          <ToolGap />
          <Tool $w={28}><SmartArtIcon /></Tool>
          <CaretTool w={14} />
        </ToolRow>
      </ToolStack>
    </RibbonGroup>

    <RibbonGroup w={250} name='Drawing' launcher='dim' grow>
      <BigButton $w={56}>
        <BigIcon><ShapesIcon /></BigIcon>
        Shapes
        <Caret size={12} strokeWidth={3} />
      </BigButton>
      <BigButton $w={58}>
        <BigIcon><ArrangeIcon /></BigIcon>
        Arrange
        <Caret size={12} strokeWidth={3} />
      </BigButton>
      <BigButton $w={62} $dim>
        <BigIcon><QuickStylesIcon /></BigIcon>
        Quick
        <InlineRow>Styles <SmallCaret /></InlineRow>
      </BigButton>
      <ToolStack>
        <ToolRow>
          <Tool $w={28}><FillIcon /></Tool>
          <CaretTool w={28} />
        </ToolRow>
        <ToolRow>
          <Tool $w={28}><OutlineIcon /></Tool>
          <CaretTool w={28} />
        </ToolRow>
        <ToolRow>
          <Tool $w={28}><EffectsIcon /></Tool>
          <CaretTool w={16} />
        </ToolRow>
      </ToolStack>
    </RibbonGroup>

    <RibbonGroup w={67} name=''>
      <BigButton>
        <BigIcon><BigSearchIcon /></BigIcon>
        Editing
        <Caret size={12} strokeWidth={3} />
      </BigButton>
    </RibbonGroup>
    <RibbonGroup w={71} name='Adobe A...'>
      <BigButton>
        <BigIcon><PdfIcon /></BigIcon>
        Create
        <span>a PDF</span>
      </BigButton>
    </RibbonGroup>
    <RibbonGroup w={71} name='Voice'>
      <BigButton>
        <BigIcon><DictateIcon /></BigIcon>
        Dictate
        <Caret size={12} strokeWidth={3} />
      </BigButton>
    </RibbonGroup>
    <RibbonGroup w={91} name='Sensitivity'>
      <BigButton $dim>
        <BigIcon><SensitivityIcon /></BigIcon>
        Sensitivity
        <Caret size={12} strokeWidth={3} />
      </BigButton>
    </RibbonGroup>
    <RibbonGroup w={75} name='Add-ins'>
      <BigButton>
        <BigIcon><AddinsIcon /></BigIcon>
        Add-ins
      </BigButton>
    </RibbonGroup>
    <RibbonGroup w={83} name=''>
      <BigButton>
        <BigIcon><DesignerIcon /></BigIcon>
        Designer
      </BigButton>
    </RibbonGroup>
    <RibbonGroup w={84} name='Giani AI (St...'>
      <BigButton>
        <BigIcon><AppBadge>G</AppBadge></BigIcon>
        Giani AI
        <span>(Staging)</span>
      </BigButton>
    </RibbonGroup>
    <CollapseCell aria-label='Collapse ribbon'>
      <ChevronDown size={16} strokeWidth={2} />
    </CollapseCell>
  </Ribbon>
);

const Addin = () => {
  const [tab, setTab] = useState('Generate');
  const [length, setLength] = useState('Insightful Action Title');

  return (
    <AddinPane>
      <PaneHead>
        <span>Giani AI PowerPoint Add-in (Staging)</span>
        <button aria-label='Pane options'><ChevronDown size={22} strokeWidth={1.5} /></button>
        <button aria-label='Close pane'><X size={20} strokeWidth={1.5} /></button>
      </PaneHead>
      <AddinFrame>
        <BrandBar>
          <BrandMark />
          <BrandName>Giani.ai</BrandName>
          <GlassSelect>
            <select aria-label='Project'>
              <option>DD - FlexPay BNPL D</option>
            </select>
            <ChevronDown size={14} strokeWidth={2} />
          </GlassSelect>
          <GlassButton aria-label='Sign out'><LogOut size={18} strokeWidth={1.7} /></GlassButton>
        </BrandBar>
        <AddinTabs>
          {['Generate', 'Refine', 'Review', 'Slides'].map((name) => (
            <AddinTab key={name} $active={tab === name} onClick={() => setTab(name)}>
              {name}
            </AddinTab>
          ))}
          <ChatButton aria-label='Chat'><PiChats size={22} /></ChatButton>
        </AddinTabs>
        <AddinScroll>
          <Cards>
            <Card>
              <CardTitle><Pencil size={19} strokeWidth={1.6} />Suggest Title</CardTitle>
              <TopicInput aria-label='Topic' placeholder='Topic for title: e.g., Q4 financial results, etc.' />
              <NotesArea aria-label='Instructions' placeholder='Instructions: e.g., Make impactful, client-focused, etc.' />
              <FieldLabel as='div'>Title length:</FieldLabel>
              <PillRow>
                {['Topic Focused Short Title', 'Insightful Action Title'].map((name) => (
                  <Pill key={name} $on={length === name} onClick={() => setLength(name)}>
                    {name}
                  </Pill>
                ))}
              </PillRow>
              <CtaWrap>
                <Cta><WandSparkles size={14} />Suggest Title</Cta>
                <ClickHalo />
                <HandCursor width='23' height='28' viewBox='0 0 23 28'>
                  <path
                    d='M6 3q0-2 2-2t2 2v8q3-1 4 1 3-1 4 1 3-1 4 2v5q0 7-7 7h-3q-3 0-5-4l-5-7q0-3 4 0z'
                    fill='#fff'
                    stroke='#333'
                  />
                  <path d='M10 11v4M14 12v4M18 13v4' stroke='#555' />
                </HandCursor>
              </CtaWrap>
            </Card>
            <Card $faded>
              <CardTitle><List size={19} strokeWidth={1.6} />Draft Bullets</CardTitle>
              <TopicInput aria-label='Bullet topic' placeholder='Topic for bullet: e.g. risks, roadmaps, etc.' />
              <NotesArea aria-label='Bullet instructions' placeholder='Instructions: e.g. factual, use professional tone, etc.' />
              <FieldLabel htmlFor='bullet-count'>Number of Bullets:</FieldLabel>
              <PickerWrap>
                <select id='bullet-count'>
                  <option>Select number of bullets</option>
                </select>
                <ChevronDown size={16} />
              </PickerWrap>
              <FieldLabel as='div'>Data Source:</FieldLabel>
              <Segments>
                <Segment $on><DocsIcon />Docs</Segment>
                <Segment><Search size={16} />Web</Segment>
                <Segment><Globe size={17} />Both</Segment>
              </Segments>
              <FilterRow><Search size={12} strokeWidth={3} />Filter &amp; Context<ChevronDown size={13} /></FilterRow>
              <Cta><WandSparkles size={14} />Suggest Bullets</Cta>
            </Card>
          </Cards>
          <ThinScroll>
            <Tri d='M0 5l3-4 3 4z' w={7} h={6} />
            <Tri d='M0 1l3 4 3-4z' w={7} h={6} />
          </ThinScroll>
        </AddinScroll>
        <SideToggle aria-label='Collapse'><ChevronLeft size={13} /></SideToggle>
      </AddinFrame>
    </AddinPane>
  );
};

const App = () => {
  const [activeTab, setActiveTab] = useState('Home');
  const [slide, setSlide] = useState(3);
  const [zoom, setZoom] = useState(36);

  return (
    <Page>
      <GlobalStyle />
      <TitleBar>
        <QuickAccess>
          <PptLogo />
          <SaveSwitch>
            AutoSave
            <SwitchInput type='checkbox' />
            <SwitchTrack>Off</SwitchTrack>
          </SaveSwitch>
          <SaveIcon />
          <IconRow $gap={6}><UndoIcon /><SmallCaret /></IconRow>
          <IconRow $gap={15}>
            <DimIcon><RedoIcon /></DimIcon>
            <PresentIcon />
          </IconRow>
          <IconRow $gap={0}><ToolGap /><CustomizeIcon /></IconRow>
        </QuickAccess>
        <DocTitle>
          <span>Commercial Due Diligence FLEXPAY (1)_updated_.pptx</span>
          <span>-</span>
          <span>AutoRecov...</span>
          <span>• Saved to this PC</span>
        </DocTitle>
        <SearchBox>
          <Search size={18} strokeWidth={1.4} transform='scale(-1 1)' />
          <input placeholder='Search' aria-label='Search' />
        </SearchBox>
        <WindowControls>
          <Avatar>VL</Avatar>
          <ControlButton aria-label='Minimise'><Minus size={16} strokeWidth={1.8} /></ControlButton>
          <ControlButton aria-label='Restore'><RestoreIcon /></ControlButton>
          <ControlButton aria-label='Close'><X size={18} strokeWidth={1.6} /></ControlButton>
        </WindowControls>
      </TitleBar>

      <TabBar>
        <Tabs>
          {ribbonTabs.map((name) => (
            <RibbonTab key={name} $active={activeTab === name} onClick={() => setActiveTab(name)}>
              {name}
            </RibbonTab>
          ))}
        </Tabs>
        <TabActions>
          <ActionButton><RecordIcon />Record</ActionButton>
          <ActionButton><TeamsIcon />Present in Teams</ActionButton>
          <ActionButton aria-label='Comments'><CommentIcon /></ActionButton>
          <ActionButton $primary><ShareIcon />Share<SmallCaret /></ActionButton>
        </TabActions>
      </TabBar>

      <RibbonPanel />

      <Workspace>
        <ThumbPane>
          <ThumbList>
            {previews.map((marks, i) => (
              <ThumbItem key={i}>
                <ThumbNumber>{i + 1}</ThumbNumber>
                <ThumbButton $active={slide === i} onClick={() => setSlide(i)} aria-label={`Slide ${i + 1}`}>
                  <Preview marks={marks} dark={i === 0} />
                </ThumbButton>
              </ThumbItem>
            ))}
          </ThumbList>
          <VScroll>
            <Tri d='M0 8L5 0l5 8z' />
            <VTrack $start={0} $size={92} />
            <Tri d='M0 0l5 8 5-8z' />
          </VScroll>
        </ThumbPane>

        <Stage>
          <HRuler>
            <Ruler labels={[6, 5, 4, 3, 2, 1, 0, 1, 2, 3, 4, 5, 6]} />
          </HRuler>
          <VRuler>
            <Ruler labels={[3, 2, 1, 0, 1, 2, 3]} vertical />
          </VRuler>
          <SlideSheet>
            <SlideTitle>
              {'BNPL origination volume reached $45.2B in 2023, with user base expanding 12% to 53.6\nmillion and loan size up 14%'}
            </SlideTitle>
            <SlideSubtitle>BNPL Industry Landscape</SlideSubtitle>
            <SlideRule />
            <SlideColumns>
              <SlideColumn>
                <ColumnHead><div>Numbers <span>at a Glance</span></div></ColumnHead>
                <BulletBox>
                  {bullets.map((text, i) => (
                    <li key={i}>{text}</li>
                  ))}
                </BulletBox>
              </SlideColumn>
              <SlideColumn>
                <ColumnHead>Attractiveness of BNPL for Merchants</ColumnHead>
                <PointList>
                  {points.map((p) => (
                    <Point key={p.name}>
                      <PointName>{p.name}</PointName>
                      <PointText $top={p.top}>{p.text}</PointText>
                    </Point>
                  ))}
                </PointList>
              </SlideColumn>
              <SlideColumn>
                <ColumnHead>Critical Headwinds</ColumnHead>
                <BulletBox>
                  <li>BNPL Market size in USA is $2Billion</li>
                </BulletBox>
              </SlideColumn>
            </SlideColumns>
            <SlideRule $foot />
            <CopilotButton aria-label='Copilot'><CopilotIcon /></CopilotButton>
          </SlideSheet>
          <HScroll>
            <Tri d='M8 0L0 5l8 5z' w={8} h={10} />
            <HThumb />
            <Tri d='M0 0l8 5-8 5z' w={8} h={10} />
          </HScroll>
        </Stage>

        <VScroll>
          <Tri d='M0 8L5 0l5 8z' />
          <VTrack $start={18} $size={6} />
          <Tri d='M0 0l5 8 5-8z' />
          <PagerArrows>
            <Tri d='M0 8L6 0l6 8zM0 16l6-8 6 8z' w={12} h={16} />
            <Tri d='M0 0l6 8 6-8zM0 8l6 8 6-8z' w={12} h={16} />
          </PagerArrows>
        </VScroll>

        <Addin />
      </Workspace>

      <StatusBar>
        <StatusLeft>
          <span>Slide 4 of 17</span>
          <Draw w={18} h={17} sw={1.3}>
            <path d='M8 14H1V1h5.500l2 2 2-2H16v7M8.500 3v11M11 9l6 7M17 9l-6 7' />
          </Draw>
          <StatusItem>English (India)</StatusItem>
          <StatusItem $push>
            <Draw w={19} h={18} sw={1.3}>
              <circle cx='8' cy='3' r='2' />
              <path d='M1 4c4 3 10 3 14 0M5 6v4l-2 7h2l3-5M11 6v4M9 14l3 3 6-7' />
            </Draw>
            Accessibility: Good to go
          </StatusItem>
          <span>Recovered</span>
        </StatusLeft>
        <StatusItem>
          <Draw w={20} h={18} sw={1.3}><path d='M7 4l3-3 3 3M0 7.500h20M0 12h20M0 16.500h20' /></Draw>
          Notes
        </StatusItem>
        <ViewControls>
          <ViewButton $on aria-label='Normal view'>
            <Draw w={18} h={15} sw={1.3}><path d='M1 1h16v13H1zM5 1v13M5 11h12M9 4h5v4H9z' /></Draw>
          </ViewButton>
          <ViewButton aria-label='Slide sorter'>
            <Draw w={18} h={15} sw={1.3}><path d='M1 1h6v4.500H1zM11 1h6v4.500h-6zM1 9h6v5H1zM11 9h6v5h-6z' /></Draw>
          </ViewButton>
          <ViewButton aria-label='Reading view'>
            <Draw w={17} h={16} sw={1.3}><path d='M8.500 2L6 1H1v13h5l2.500 1 2.500-1h5V1h-5zM8.500 2v13M3 4h3M3 7h3M3 10h3M11 4h3M11 7h3M11 10h3' /></Draw>
          </ViewButton>
          <ViewButton aria-label='Slide show'><PresentIcon play={false} /></ViewButton>
          <ZoomGroup>
            <Minus size={12} strokeWidth={1.8} />
            <ZoomRange
              type='range'
              aria-label='Zoom'
              value={zoom}
              onChange={(e) => setZoom(Number(e.target.value))}
            />
            <Plus size={12} strokeWidth={1.8} />
          </ZoomGroup>
          <ZoomValue>75%</ZoomValue>
          <Draw w={18} h={18} sw={1.3}>
            <path d='M5.500 5h7v8h-7zM7 2.500L9 .5l2 2M7 15.500l2 2 2-2M2.500 7L.5 9l2 2M15.500 7l2 2-2 2' />
          </Draw>
        </ViewControls>
      </StatusBar>

      <Taskbar>
        <TaskApps>
          <TaskButton aria-label='Start'>{task.windows}</TaskButton>
          <TaskButton aria-label='Files'>{task.folder}<Marker $w={7} $c='#88888c' /></TaskButton>
          <TaskButton aria-label='Store'>{task.store}</TaskButton>
          <TaskButton aria-label='Edge'>{task.edge}</TaskButton>
          <TaskButton aria-label='Chrome'>{task.chrome}</TaskButton>
          <TaskButton aria-label='Chrome profile'>
            {task.chrome}
            <Badge $c='#0e4c38'>V</Badge>
            <Marker $w={7} $c='#88888c' />
          </TaskButton>
          <TaskButton $tone='dark' aria-label='PowerPoint'>{task.powerpoint}<Marker $w={20} $c='#4cb8e8' /></TaskButton>
          <TaskButton $tone='rose' aria-label='Microsoft'>{task.microsoft}<Marker $w={38} $c='#f08ca4' /></TaskButton>
          <TaskButton aria-label='Excel'>{task.excel}<Marker $w={7} $c='#88888c' /></TaskButton>
          <TaskButton $tone='rose' $stacked aria-label='Word'>{task.word}<Marker $w={26} $c='#f08ca4' /></TaskButton>
          <TaskButton aria-label='Slack'>
            {task.slack}
            <Badge $c='#c41848'>+</Badge>
            <Marker $w={7} $c='#88888c' />
          </TaskButton>
          <TaskButton aria-label='Snipping tool'>{task.snip}<Marker $w={7} $c='#88888c' /></TaskButton>
        </TaskApps>
        <Weather>
          <svg width='28' height='28' viewBox='0 0 28 28'>
            <circle cx='12' cy='13' r='12' fill='#e8942c' />
            <path d='M14 23a4 4 0 0 1 0-7 5 5 0 0 1 9-1 4 4 0 0 1 1 8z' fill='#c0d4ec' />
          </svg>
          <span>
            41°C
            <span>Mostly sunny</span>
          </span>
        </Weather>
        <Tray>
          <IconRow $gap={18}>
            <ChevronUp size={17} strokeWidth={2} />
            <Draw w={22} h={22} sw={1.4}>
              <path d='M2 9C3 2 14-1 18 6M18 1v5.500h-5M8 14H2v6M2.500 14.500l5 5' />
              <circle cx='16' cy='16' r='5' fill='#f09c2c' stroke='none' />
            </Draw>
            <MicIcon size={19} strokeWidth={1.5} />
          </IconRow>
          <TrayText $w={72}>ENG<br />IN</TrayText>
          <IconRow $gap={9}>
            <Draw w={20} h={16} sw={1.5}>
              <path d='M1 6c5-6 13-6 18 0M4 9c3-4 9-4 12 0M7 12c2-2 4-2 6 0' />
              <circle cx='10' cy='14' r='1.500' fill='currentColor' />
            </Draw>
            <Draw w={20} h={16} sw={1.3}>
              <path d='M1 5.500h3l5-4v13l-5-4H1zM13 5l5.500 6M18.500 5L13 11' />
            </Draw>
            <Draw w={25} h={15} sw={1.3}>
              <rect x='1' y='1' width='21' height='13' rx='3.500' />
              <path d='M4 4v7' stroke='#e03c50' strokeWidth='2' />
              <path d='M24 5v5' />
            </Draw>
          </IconRow>
          <TrayText $w={84} $right>4:09 PM<br />5/17/2026</TrayText>
          <BellSlot aria-label='Notifications'>
            <Draw w={18} h={20} sw={1.3}>
              <path d='M8 2C4 2 3 5 3 8l-2 8h15l-1-4M6 17c1 2.500 4 2.500 5 0M7 7h4l-4 5h4M12 2h4l-4 5h4' />
            </Draw>
          </BellSlot>
        </Tray>
      </Taskbar>
    </Page>
  );
};

export default App;
